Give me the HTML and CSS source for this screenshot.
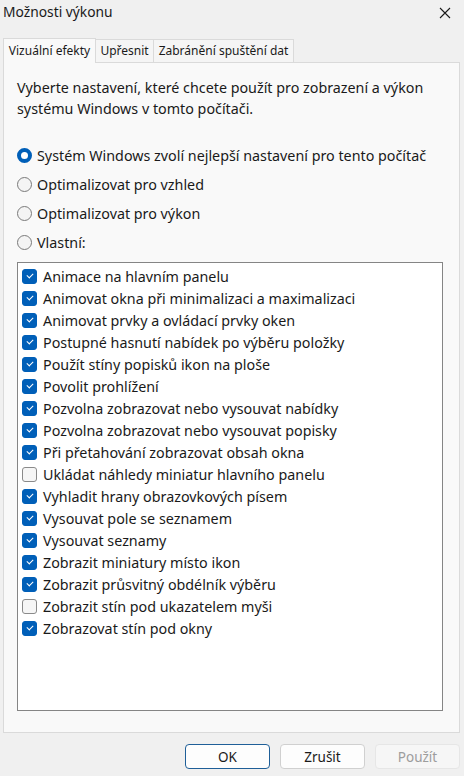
FILE: index.html
```html
<!DOCTYPE html>
<html lang="cs">
<head>
<meta charset="utf-8">
<link rel="stylesheet" href="styles.css">
</head>
<body>
<div class="win">
  <div class="titlebar">
    <span class="title">Možnosti výkonu</span>
    <svg class="close" width="12" height="12" viewBox="0 0 12 12"><path d="M1 1 L11 11 M11 1 L1 11" stroke="#1a1a1a" stroke-width="1.1" fill="none"/></svg>
  </div>
  <div class="tabs">
    <div class="tab active t1">Vizuální efekty</div>
    <div class="tab t2">Upřesnit</div>
    <div class="tab t3">Zabránění spuštění dat</div>
  </div>
  <div class="panel">
    <p class="intro">Vyberte nastavení, které chcete použít pro zobrazení a výkon systému Windows v tomto počítači.</p>
    <div class="radios">
      <div class="radio checked"><span class="rb"></span>Systém Windows zvolí nejlepší nastavení pro tento počítač</div>
      <div class="radio"><span class="rb"></span>Optimalizovat pro vzhled</div>
      <div class="radio"><span class="rb"></span>Optimalizovat pro výkon</div>
      <div class="radio"><span class="rb"></span>Vlastní:</div>
    </div>
    <div class="list">
      <div class="item"><span class="cb on"></span>Animace na hlavním panelu</div>
      <div class="item"><span class="cb on"></span>Animovat okna při minimalizaci a maximalizaci</div>
      <div class="item"><span class="cb on"></span>Animovat prvky a ovládací prvky oken</div>
      <div class="item"><span class="cb on"></span>Postupné hasnutí nabídek po výběru položky</div>
      <div class="item"><span class="cb on"></span>Použít stíny popisků ikon na ploše</div>
      <div class="item"><span class="cb on"></span>Povolit prohlížení</div>
      <div class="item"><span class="cb on"></span>Pozvolna zobrazovat nebo vysouvat nabídky</div>
      <div class="item"><span class="cb on"></span>Pozvolna zobrazovat nebo vysouvat popisky</div>
      <div class="item"><span class="cb on"></span>Při přetahování zobrazovat obsah okna</div>
      <div class="item"><span class="cb"></span>Ukládat náhledy miniatur hlavního panelu</div>
      <div class="item"><span class="cb on"></span>Vyhladit hrany obrazovkových písem</div>
      <div class="item"><span class="cb on"></span>Vysouvat pole se seznamem</div>
      <div class="item"><span class="cb on"></span>Vysouvat seznamy</div>
      <div class="item"><span class="cb on"></span>Zobrazit miniatury místo ikon</div>
      <div class="item"><span class="cb on"></span>Zobrazit průsvitný obdélník výběru</div>
      <div class="item"><span class="cb"></span>Zobrazit stín pod ukazatelem myši</div>
      <div class="item"><span class="cb on"></span>Zobrazovat stín pod okny</div>
    </div>
  </div>
  <div class="buttons">
    <button class="btn default">OK</button>
    <button class="btn">Zrušit</button>
    <button class="btn disabled">Použít</button>
  </div>
</div>
</body>
</html>
```
FILE: styles.css
```css
* { box-sizing: border-box; }
html, body { margin: 0; padding: 0; }
body {
  width: 464px; height: 776px; overflow: hidden;
  background: #f0f0f0;
  font-family: "Noto Sans", "Open Sans", sans-serif;
  font-size: 14.3px;
  color: #1a1a1a;
}
.win { display: flex; flex-direction: column; height: 776px; }
.titlebar {
  height: 38px; display: flex; align-items: flex-start; justify-content: space-between;
  padding: 1px 13px 0 3px;
}
.title { font-size: 13.8px; line-height: 22px; }
.close { margin-top: 6px; }
.tabs { display: flex; padding-left: 3px; height: 24px; align-items: flex-end; position: relative; z-index: 1; }
.tab {
  height: 23px; line-height: 21px; padding: 0; text-align: center; white-space: nowrap;
  border: 1px solid #dadada; border-bottom: none; border-left: none;
  background: #f5f5f5; font-size: 12px;
}
.tab.active {
  height: 25px; background: #f9f9f9; border-left: 1px solid #dadada;
  margin-bottom: -1px; line-height: 23px;
}
.t1 { width: 93px; }
.t2 { width: 58px; }
.t3 { width: 140px; }
.panel {
  margin: 0 4px 0 3px; height: 671px;
  background: #f9f9f9; border: 1px solid #dadada;
  padding: 14px 16px 0 13px;
}
.intro { margin: 0; font-size: 14.3px; line-height: 21px; width: 420px; }
.radios { margin-top: 26px; display: flex; flex-direction: column; gap: 8px; }
.radio { display: flex; align-items: center; height: 21px; font-size: 14.3px; white-space: nowrap; }
.rb {
  width: 15px; height: 15px; border-radius: 50%; border: 1px solid #7a7a7a;
  background: #f4f4f4; margin-right: 5px; flex: none;
}
.radio.checked .rb { border: 4px solid #005fb8; background: #fff; }
.list {
  margin-top: 9px; height: 449px; background: #fff; border: 1px solid #858585;
  padding: 2px 0 0 4px;
}
.item { display: flex; align-items: center; height: 22px; font-size: 14.3px; white-space: nowrap; }
.cb {
  width: 15px; height: 15px; border-radius: 3px; border: 1px solid #8a8a8a;
  background: #f6f6f6; margin-right: 6px; flex: none; position: relative;
}
.cb.on { background: #005fb8; border-color: #005fb8; }
.cb.on::after {
  content: ""; position: absolute; left: 4px; top: 3px; width: 5px; height: 3px;
  border-left: 1px solid #fff; border-bottom: 1px solid #fff; transform: rotate(-45deg);
}
.buttons { display: flex; justify-content: flex-end; gap: 10px; padding: 11px 4px 0 0; }
.btn {
  width: 85px; height: 25px; font-family: inherit; font-size: 13.5px; color: #1a1a1a;
  background: #fdfdfd; border: 1px solid #d0d0d0; border-radius: 4px;
}
.btn.default { border-color: #1f5f98; }
.btn.disabled { background: #f6f6f6; border-color: #e6e6e6; color: #9d9d9d; }
```
